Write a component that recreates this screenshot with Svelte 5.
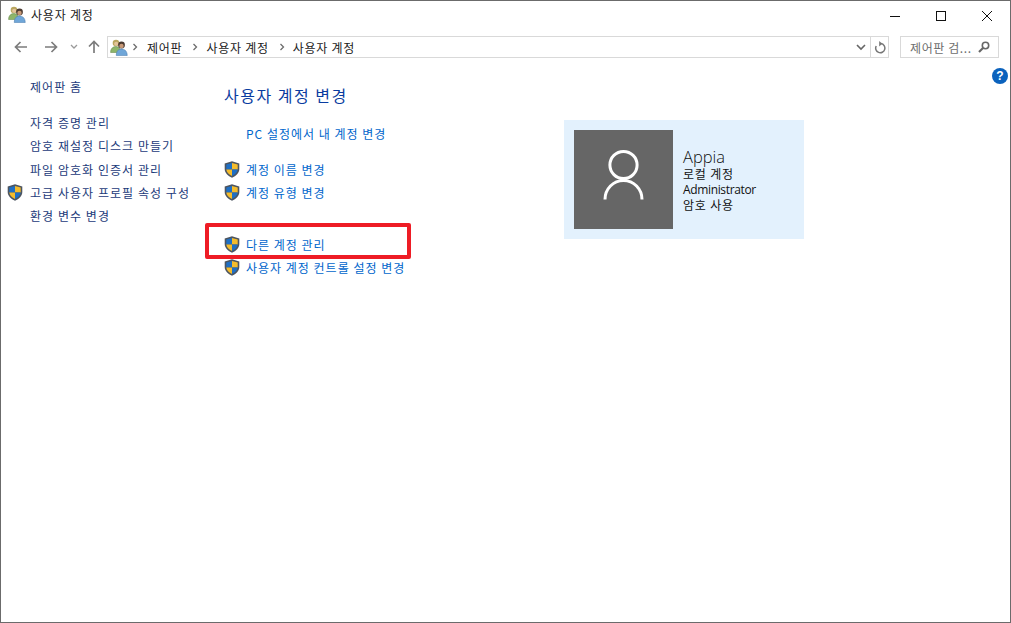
<script>
	const sideTop = [
		{ label: '자격 증명 관리' },
		{ label: '암호 재설정 디스크 만들기' },
		{ label: '파일 암호화 인증서 관리' },
		{ label: '고급 사용자 프로필 속성 구성', shield: true },
		{ label: '환경 변수 변경' }
	];
</script>

{#snippet shield()}
	<svg class="shield" viewBox="0 0 16 17" width="16" height="17">
		<path d="M8 .3 L15.3 2.5 V8 C15.3 12 12 15 8 16.8 C4 15 .7 12 .7 8 V2.5 Z" fill="#4d5560" />
		<path d="M8 2 V8.5 H2.3 V3.6 Z" fill="#1f6fc4" />
		<path d="M8 2 L13.7 3.6 V8.5 H8 Z" fill="#f4bc2c" />
		<path d="M2.3 8.5 H8 V15 C4.8 13.7 2.6 11.4 2.3 8.5 Z" fill="#f4bc2c" />
		<path d="M8 8.5 H13.7 C13.4 11.4 11.2 13.7 8 15 Z" fill="#1f6fc4" />
	</svg>
{/snippet}

{#snippet users()}
	<svg viewBox="0 0 18 17" width="18" height="17">
		<circle cx="6" cy="4" r="3.3" fill="#b9a65e" />
		<circle cx="6.2" cy="4.8" r="2.1" fill="#e3c39a" />
		<path d="M.6 13.5 C.6 9.5 3 7.6 6 7.6 C9 7.6 10.5 10 10.5 13.5 Z" fill="#8db56a" stroke="#6d8f50" stroke-width=".6" />
		<circle cx="11.5" cy="6" r="3.4" fill="#4b3a30" />
		<circle cx="11.5" cy="6.9" r="2.2" fill="#c99a78" />
		<path d="M6.3 16.6 C6.3 12 8.5 10 11.5 10 C14.5 10 17.2 12 17.2 16.6 Z" fill="#6fa6d8" stroke="#4d80b0" stroke-width=".6" />
	</svg>
{/snippet}

{#snippet crumbSep()}
	<svg class="sep" viewBox="0 0 6 8" width="6" height="8"><path d="M1.5 1 L4.5 4 L1.5 7" fill="none" stroke="#6d6d6d" stroke-width="1.3" /></svg>
{/snippet}

<div class="window">
	<header class="titlebar">
		<div class="title">
			{@render users()}
			<span>사용자 계정</span>
		</div>
		<div class="controls">
			<button aria-label="최소화"><svg viewBox="0 0 10 10" width="10" height="10"><path d="M0 5.5 H10" stroke="#111" /></svg></button>
			<button aria-label="최대화"><svg viewBox="0 0 10 10" width="10" height="10"><rect x=".5" y=".5" width="9" height="9" fill="none" stroke="#111" /></svg></button>
			<button aria-label="닫기"><svg viewBox="0 0 10 10" width="10" height="10"><path d="M0 0 L10 10 M10 0 L0 10" stroke="#111" /></svg></button>
		</div>
	</header>

	<nav class="navbar">
		<div class="navbtns">
			<svg viewBox="0 0 14 12" width="14" height="12"><path d="M13 6 H2 M6.5 1 L1.5 6 L6.5 11" fill="none" stroke="#7c7c7c" stroke-width="1.7" /></svg>
			<svg class="fwd" viewBox="0 0 14 12" width="14" height="12"><path d="M1 6 H12 M7.5 1 L12.5 6 L7.5 11" fill="none" stroke="#7c7c7c" stroke-width="1.7" /></svg>
			<svg class="drop" viewBox="0 0 8 6" width="8" height="6"><path d="M1 1 L4 4 L7 1" fill="none" stroke="#9a9a9a" stroke-width="1.3" /></svg>
			<svg class="up" viewBox="0 0 12 14" width="12" height="14"><path d="M6 13 V2 M1 6.5 L6 1.5 L11 6.5" fill="none" stroke="#7c7c7c" stroke-width="1.7" /></svg>
		</div>
		<div class="address">
			<div class="crumbs">
				{@render users()}
				{@render crumbSep()}
				<span>제어판</span>
				{@render crumbSep()}
				<span>사용자 계정</span>
				{@render crumbSep()}
				<span>사용자 계정</span>
			</div>
			<svg class="chev" viewBox="0 0 10 7" width="10" height="7"><path d="M1 1 L5 5 L9 1" fill="none" stroke="#666" stroke-width="1.6" /></svg>
			<div class="refresh">
				<svg viewBox="0 0 12 13" width="12" height="13"><path d="M7 2.6 A4.6 4.6 0 1 1 2.2 5" fill="none" stroke="#777" stroke-width="1.5" /><path d="M3.6 0 V5.4 L.6 2.7 Z" transform="rotate(180 4.4 2.7)" fill="#777" /></svg>
			</div>
		</div>
		<div class="search">
			<span>제어판 검...</span>
			<svg viewBox="0 0 12 12" width="12" height="12"><circle cx="7.5" cy="4.5" r="3.2" fill="none" stroke="#666" stroke-width="1.6" /><path d="M5 7 L1 11" stroke="#666" stroke-width="2.2" /></svg>
		</div>
	</nav>

	<main class="content">
		<aside class="sidebar">
			<a class="home" href="#home">제어판 홈</a>
			{#each sideTop as item}
				<a class="side" href="#side">
					{#if item.shield}<span class="sideicon">{@render shield()}</span>{/if}
					{item.label}
				</a>
			{/each}
		</aside>

		<section class="tasks">
			<h1>사용자 계정 변경</h1>
			<a class="task plain" href="#task"><span class="slot"></span>PC 설정에서 내 계정 변경</a>
			<a class="task first" href="#task"><span class="slot">{@render shield()}</span>계정 이름 변경</a>
			<a class="task" href="#task"><span class="slot">{@render shield()}</span>계정 유형 변경</a>
			<div class="highlight">
				<a class="task" href="#task"><span class="slot">{@render shield()}</span>다른 계정 관리</a>
				<a class="task" href="#task"><span class="slot">{@render shield()}</span>사용자 계정 컨트롤 설정 변경</a>
				<div class="redbox"></div>
			</div>
		</section>

		<section class="card">
			<div class="avatar">
				<svg viewBox="0 0 99 99" width="99" height="99">
					<circle cx="49.5" cy="35" r="13.6" fill="none" stroke="#fff" stroke-width="3" />
					<path d="M31 69.5 A18.5 19 0 0 1 68 69.5" fill="none" stroke="#fff" stroke-width="3" />
				</svg>
			</div>
			<div class="info">
				<div class="name">Appia</div>
				<div>로컬 계정</div>
				<div class="latin">Administrator</div>
				<div>암호 사용</div>
			</div>
		</section>

		<div class="help">?</div>
	</main>
</div>

<style>
	:global(body) {
		margin: 0;
		background: #fff;
	}

	.window {
		box-sizing: border-box;
		width: 1011px;
		height: 623px;
		border: 1px solid #6b6b6b;
		font-family: 'Noto Sans CJK KR', 'Liberation Sans', sans-serif;
		font-size: 12px;
		color: #1a1a1a;
		display: flex;
		flex-direction: column;
		overflow: hidden;
		background: #fff;
	}

	.titlebar {
		height: 29px;
		display: flex;
		justify-content: space-between;
		flex-shrink: 0;
	}

	.title {
		display: flex;
		align-items: center;
		gap: 5px;
		padding: 0 0 2px 7px;
		letter-spacing: 0.8px;
	}

	.controls {
		display: flex;
	}

	.controls button {
		width: 46px;
		height: 29px;
		border: 0;
		padding: 0;
		background: none;
		display: flex;
		align-items: center;
		justify-content: center;
	}

	.navbar {
		height: 34px;
		display: flex;
		align-items: center;
		flex-shrink: 0;
	}

	.navbtns {
		width: 106px;
		padding-left: 13px;
		box-sizing: border-box;
		display: flex;
		align-items: center;
	}

	.fwd {
		margin-left: 16px;
	}

	.drop {
		margin-left: 12px;
	}

	.up {
		margin-left: 10px;
	}

	.address {
		width: 782px;
		height: 22px;
		box-sizing: border-box;
		border: 1px solid #d9d9d9;
		display: flex;
		align-items: center;
	}

	.crumbs {
		flex: 1;
		display: flex;
		align-items: center;
		padding-left: 2px;
		letter-spacing: 0.75px;
	}

	.sep {
		margin: 0 8px 0 10px;
		flex-shrink: 0;
	}

	.crumbs .sep:nth-child(2) {
		margin: 0 9px 0 4px;
	}

	.chev {
		margin-right: 4px;
	}

	.refresh {
		width: 17px;
		height: 20px;
		border-left: 1px solid #d9d9d9;
		display: flex;
		align-items: center;
		justify-content: center;
	}

	.search {
		width: 99px;
		height: 22px;
		box-sizing: border-box;
		margin-left: 11px;
		border: 1px solid #d9d9d9;
		display: flex;
		align-items: center;
		justify-content: space-between;
		padding: 0 8px 0 9px;
		color: #6d6d6d;
		letter-spacing: 0.6px;
	}

	.content {
		flex: 1;
		position: relative;
		display: flex;
		align-items: flex-start;
	}

	a {
		text-decoration: none;
		display: flex;
		align-items: center;
		white-space: nowrap;
	}

	.sidebar {
		width: 223px;
		flex-shrink: 0;
		padding: 12px 0 0 29px;
		box-sizing: border-box;
		display: flex;
		flex-direction: column;
		letter-spacing: 1.05px;
	}

	.home {
		height: 20px;
		margin-bottom: 15px;
		color: #1c3a7a;
	}

	.side {
		height: 23.3px;
		color: #1c3a7a;
		position: relative;
	}

	.sideicon {
		position: absolute;
		left: -23px;
		top: 3px;
		display: flex;
	}

	.tasks {
		width: 340px;
		flex-shrink: 0;
		padding-top: 20px;
		box-sizing: border-box;
		letter-spacing: 1px;
	}

	h1 {
		margin: 0 0 16px;
		font-size: 16px;
		font-weight: 400;
		line-height: 22px;
		color: #0a3ca0;
		letter-spacing: 1.5px;
	}

	.task {
		height: 23.3px;
		color: #0066cc;
	}

	.first {
		margin-top: 12.5px;
	}

	.slot {
		width: 22px;
		display: flex;
		align-items: center;
	}

	.highlight {
		position: relative;
		margin-top: 28px;
	}

	.redbox {
		position: absolute;
		left: -19px;
		top: -9px;
		width: 206px;
		height: 36px;
		box-sizing: border-box;
		border: 4px solid #ee1c25;
		border-radius: 2px;
	}

	.card {
		margin-top: 56px;
		width: 240px;
		height: 119px;
		background: #e3f1fd;
		padding: 10px;
		box-sizing: border-box;
		display: flex;
		align-items: center;
		gap: 10px;
	}

	.avatar {
		width: 99px;
		height: 99px;
		background: #666;
		display: flex;
	}

	.info {
		line-height: 15.5px;
		letter-spacing: 0.8px;
		color: #111;
	}

	.info .latin {
		font-family: 'Open Sans', 'Liberation Sans', sans-serif;
		letter-spacing: -0.35px;
	}

	.info .name {
		font-family: 'Open Sans', 'Liberation Sans', sans-serif;
		font-size: 16.5px;
		font-weight: 300;
		line-height: 18px;
		letter-spacing: 0;
		padding-top: 2px;
	}

	.help {
		position: absolute;
		right: 2px;
		top: 4px;
		width: 16px;
		height: 16px;
		border-radius: 50%;
		background: #0b62bd;
		color: #fff;
		font: bold 12px/16px 'Liberation Sans', sans-serif;
		text-align: center;
	}
</style>
